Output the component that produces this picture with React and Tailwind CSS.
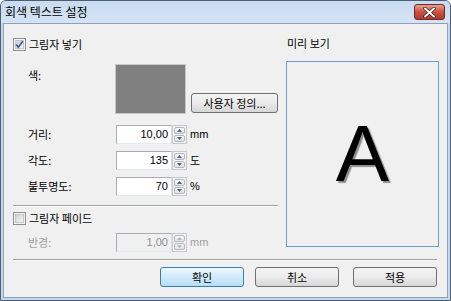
const KR = "font-['Noto_Sans_CJK_KR','Liberation_Sans',sans-serif]";
const NUM = "font-['Liberation_Sans',sans-serif]";

const CheckBox = ({ checked }) => (
  <svg width="13" height="13" viewBox="0 0 13 13" className="shrink-0">
    <defs>
      <linearGradient id={checked ? "cbg1" : "cbg2"} x1="0" y1="0" x2="1" y2="1">
        <stop offset="0" stopColor="#cbcfd5" />
        <stop offset="1" stopColor="#f6f6f6" />
      </linearGradient>
    </defs>
    <rect x="0.5" y="0.5" width="12" height="12" fill="#f4f4f4" stroke="#8e8f8f" />
    <rect x="2.5" y="2.5" width="8" height="8" fill={`url(#${checked ? "cbg1" : "cbg2"})`} stroke="#c3c6cb" />
    {checked && (
      <path d="M3.2 6.4 L5.3 9.2 L9.8 3.2" fill="none" stroke="#3b5aa0" strokeWidth="1.7" />
    )}
  </svg>
);

const Spinner = ({ disabled }) => {
  const c = disabled ? "#b5b5b5" : "#4d6185";
  return (
    <div className="w-[15px] h-[19px] flex flex-col gap-px p-px border border-[#c5c9cf] bg-[#f4f4f4]">
      {[0, 1].map((i) => (
        <div
          key={i}
          className="flex-1 flex items-center justify-center rounded-[2px] border border-[#b3b6bb] bg-gradient-to-b from-[#f7f7f7] to-[#e2e2e2]"
        >
          <svg width="5" height="3" viewBox="0 0 5 3">
            <path d={i === 0 ? "M0 3 L2.5 0 L5 3 Z" : "M0 0 L2.5 3 L5 0 Z"} fill={c} />
          </svg>
        </div>
      ))}
    </div>
  );
};

const SpinInput = ({ value, unit, disabled, unitKr }) => (
  <div className="flex items-center">
    <div
      className={`w-[56px] h-[19px] border border-[#abadb3] border-b-[#e3e9ef] border-r-[#dbdfe6] flex items-center justify-end pr-[3px] text-[11px] ${NUM} ${
        disabled ? "bg-[#f0f0f0] text-[#8d8d8d]" : "bg-white text-black"
      }`}
    >
      {value}
    </div>
    <Spinner disabled={disabled} />
    <span
      className={`ml-[3px] text-[11px] ${unitKr ? KR : NUM} ${disabled ? "text-[#a0a0a0]" : "text-black"}`}
    >
      {unit}
    </span>
  </div>
);

const WinButton = ({ children, primary, className = "" }) => (
  <div
    className={`h-[20px] flex items-center justify-center rounded-[3px] border text-[11px] text-black ${KR} ${
      primary
        ? "border-[#3c7fb1] bg-gradient-to-b from-[#ecf7fd] to-[#b6def7]"
        : "border-[#707070] bg-gradient-to-b from-[#f4f4f4] via-[#ebebeb] to-[#d6d6d6]"
    } ${className}`}
  >
    {children}
  </div>
);

const Row = ({ label, disabled, children, className = "" }) => (
  <div className={`flex items-center h-[19px] ${className}`}>
    <div className={`w-[103px] pl-[15px] text-[11px] ${KR} ${disabled ? "text-[#a0a0a0]" : "text-black"}`}>
      {label}
    </div>
    {children}
  </div>
);

export default function App() {
  return (
    <div className="w-[451px] h-[301px] flex flex-col border border-[#4f5d6e] rounded-t-[6px] bg-[#c3d7ee] overflow-hidden">
      <div className="h-[22px] flex items-center justify-between pl-[4px] pr-[5px] bg-gradient-to-b from-[#c9dbf1] to-[#d5e3f4]">
        <span className={`text-[12px] text-black ${KR}`}>회색 텍스트 설정</span>
        <div className="w-[31px] h-[16px] rounded-[3px] border border-[#6b2b2b] bg-gradient-to-b from-[#e6a08e] via-[#c9503d] to-[#b23c2c] flex items-center justify-center">
          <svg width="13" height="11" viewBox="0 0 13 11">
            <path d="M2 1.5 L11 9.5 M11 1.5 L2 9.5" stroke="#3a1a1a" strokeWidth="3.4" strokeLinecap="round" />
            <path d="M2 1.5 L11 9.5 M11 1.5 L2 9.5" stroke="#ffffff" strokeWidth="2" strokeLinecap="round" />
          </svg>
        </div>
      </div>
      <div className="flex-1 mx-[2px] mb-[2px] border border-[#8da2b8] bg-[#f0f0f0] flex flex-col">
        <div className="h-[235px] flex pl-[9px]">
          <div className="w-[265px] flex flex-col">
            <div className="mt-[14px] h-[13px] flex items-center gap-[3px]">
              <CheckBox checked />
              <span className={`text-[11px] text-black ${KR}`}>그림자 넣기</span>
            </div>
            <div className="mt-[13px] h-[50px] flex">
              <div className={`w-[103px] pl-[15px] pt-[3px] text-[11px] text-black ${KR}`}>색:</div>
              <div className="w-[72px] h-[50px] bg-[#808080] border border-[#c8c8c8]" />
              <WinButton className="ml-[5px] self-end mb-[1px] w-[88px]">사용자 정의...</WinButton>
            </div>
            <Row label="거리:" className="mt-[11px]">
              <SpinInput value="10,00" unit="mm" />
            </Row>
            <Row label="각도:" className="mt-[7px]">
              <SpinInput value="135" unit="도" unitKr />
            </Row>
            <Row label="불투명도:" className="mt-[7px]">
              <SpinInput value="70" unit="%" />
            </Row>
            <div className="mt-[9px] h-[2px] border-t border-[#a0a0a0] border-b border-b-white" />
            <div className="mt-[5px] h-[13px] flex items-center gap-[3px]">
              <CheckBox />
              <span className={`text-[11px] text-black ${KR}`}>그림자 페이드</span>
            </div>
            <Row label="반경:" disabled className="mt-[8px]">
              <SpinInput value="1,00" unit="mm" disabled />
            </Row>
          </div>
          <div className="ml-[8px] w-[153px] flex flex-col">
            <div className={`mt-[12px] h-[15px] leading-[15px] pl-[1px] text-[11px] text-black ${KR}`}>미리 보기</div>
            <div className="mt-[10px] h-[186px] border border-[#6a9fd6] bg-[#f0f0f0] flex items-center justify-center">
              <span className={`text-[80px] leading-none text-black ${NUM} [text-shadow:2px_2px_1px_#8e8e8e]`}>A</span>
            </div>
          </div>
        </div>
        <div className="ml-[9px] w-[424px] h-[2px] border-t border-[#a0a0a0] border-b border-b-white" />
        <div className="mt-[6px] flex">
          <WinButton primary className="ml-[156px] w-[84px]">확인</WinButton>
          <WinButton className="ml-[11px] w-[84px]">취소</WinButton>
          <WinButton className="ml-[14px] w-[84px]">적용</WinButton>
        </div>
      </div>
    </div>
  );
}
